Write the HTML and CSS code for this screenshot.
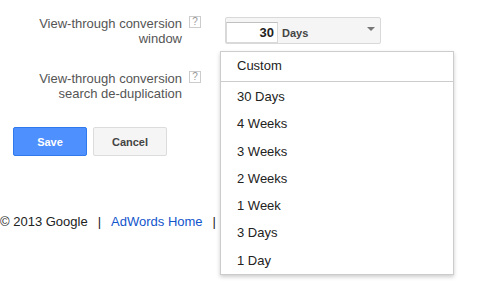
FILE: index.html
```html
<!DOCTYPE html>
<html lang="en">
<head>
    <meta charset="UTF-8">
    <meta name="viewport" content="width=device-width, initial-scale=1.0">
    <title>Conversion settings</title>
    <link rel="stylesheet" href="styles.css">
</head>
<body>
    <div class="form">
        <div class="row">
            <div class="label">View-through conversion<br>window</div>
            <span class="help">?</span>
            <div class="field">
                <div class="select">
                    <div class="num">30</div>
                    <span class="unit">Days</span>
                    <span class="arrow"></span>
                    <div class="menu">
                        <div class="menu-custom">Custom</div>
                        <ul class="menu-list">
                            <li>30 Days</li>
                            <li>4 Weeks</li>
                            <li>3 Weeks</li>
                            <li>2 Weeks</li>
                            <li>1 Week</li>
                            <li>3 Days</li>
                            <li>1 Day</li>
                        </ul>
                    </div>
                </div>
            </div>
        </div>

        <div class="row">
            <div class="label">View-through conversion<br>search de-duplication</div>
            <span class="help">?</span>
        </div>

        <div class="actions">
            <button class="btn btn-save">Save</button>
            <button class="btn">Cancel</button>
        </div>
    </div>

    <div class="footer">
        <span>&copy; 2013 Google</span><span class="sep">|</span><a href="#">AdWords Home</a><span class="sep">|</span>
    </div>
</body>
</html>
```

FILE: styles.css
```css
html {
    height: 100%;
}
body {
    margin: 0;
    padding: 0;
    min-height: 100%;
    font-family: Arial, "Liberation Sans", sans-serif;
    font-size: 13px;
    line-height: 15px;
    color: #222;
    background: #fff;
}
.form {
    padding-top: 16px;
}
.row {
    display: flex;
    align-items: flex-start;
    margin-bottom: 25px;
}
.label {
    width: 182px;
    text-align: right;
    color: #555;
}
.help {
    box-sizing: border-box;
    width: 12px;
    height: 12px;
    margin-left: 7px;
    border: 1px solid #ccc;
    background: #fff;
    color: #999;
    font-size: 10px;
    line-height: 10px;
    text-align: center;
}
.field {
    margin-left: 24px;
}
.select {
    position: relative;
    box-sizing: border-box;
    width: 156px;
    height: 27px;
    margin-top: 1px;
    padding-top: 4px;
    border: 1px solid #d9d9d9;
    border-radius: 2px;
    background: #f5f5f5;
    display: flex;
    align-items: baseline;
}
.num {
    box-sizing: border-box;
    width: 52px;
    height: 21px;
    padding-right: 3px;
    border: 1px solid #d9d9d9;
    border-top-color: #c0c0c0;
    background: #fff;
    text-align: right;
    font-weight: bold;
    line-height: 19px;
    color: #222;
}
.unit {
    margin-left: 4px;
    font-size: 11px;
    font-weight: bold;
    color: #444;
}
.arrow {
    align-self: flex-start;
    margin-left: auto;
    margin-right: 5px;
    margin-top: 5px;
    width: 0;
    height: 0;
    border-left: 4px solid transparent;
    border-right: 4px solid transparent;
    border-top: 4px solid #777;
}
.menu {
    position: absolute;
    left: -6px;
    top: 33px;
    width: 232px;
    border: 1px solid #ccc;
    background: #fff;
    box-shadow: 0 2px 4px rgba(0, 0, 0, 0.2);
    z-index: 2;
}
.menu-custom {
    padding: 6px 16px 8px;
    border-bottom: 1px solid #ccc;
    color: #222;
}
.menu-list {
    list-style: none;
    margin: 0;
    padding: 1px 0 0;
}
.menu-list li {
    padding: 0 16px;
    line-height: 27.3px;
    color: #222;
}
.actions {
    display: flex;
    gap: 6px;
    margin-left: 13px;
    margin-top: 26px;
}
.btn {
    box-sizing: border-box;
    width: 74px;
    height: 29px;
    border: 1px solid #dcdcdc;
    border-radius: 2px;
    background: #f5f5f5;
    color: #444;
    font-family: Arial, "Liberation Sans", sans-serif;
    font-size: 11px;
    font-weight: bold;
    padding: 0;
}
.btn-save {
    border-color: #3079ed;
    background: #4d90fe;
    color: #fff;
}
.footer {
    margin-top: 58px;
    color: #222;
}
.footer a {
    color: #15c;
    text-decoration: none;
}
.sep {
    margin: 0 10px;
}
```
